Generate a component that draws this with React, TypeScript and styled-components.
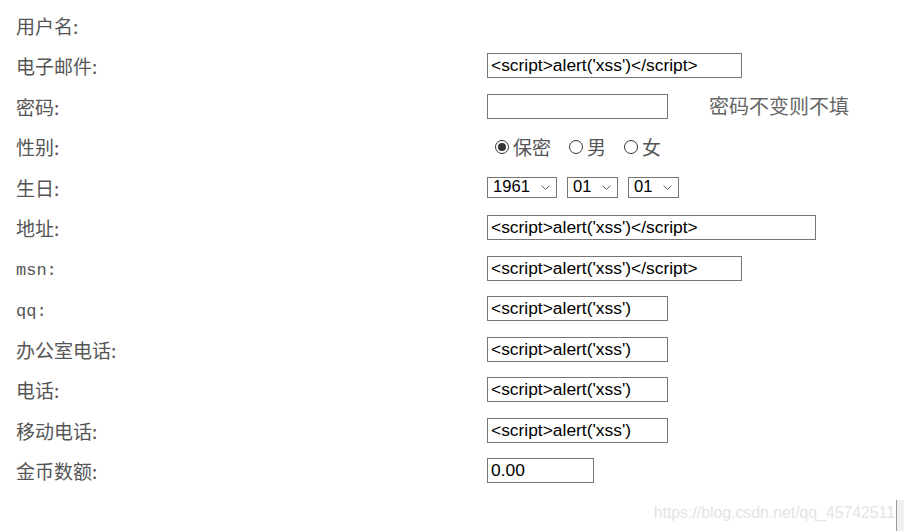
import React from "react";
import styled, { createGlobalStyle } from "styled-components";

const GlobalStyle = createGlobalStyle`
  html, body {
    margin: 0;
    padding: 0;
    background: #fff;
  }
  body {
    font-family: "Noto Sans CJK SC", sans-serif;
  }
`;

const PageSld = styled.div`
  position: relative;
  width: 904px;
  height: 531px;
  overflow: hidden;
  padding-top: 5px;
  box-sizing: border-box;
`;

const RowSld = styled.div`
  display: grid;
  grid-template-columns: 471px 1fr;
  align-items: center;
  height: 40.5px;
  padding-left: 16px;
`;

const LabelSld = styled.div`
  font-family: "Noto Sans CJK SC", sans-serif;
  font-size: 19px;
  color: #555;
  line-height: 1;
`;

const LatinSld = styled.span`
  font-family: "Liberation Mono", monospace;
  font-size: 17px;
`;

const FieldSld = styled.div`
  display: flex;
  align-items: center;
`;

const InputSld = styled.input<{ $w: number }>`
  width: ${(p) => p.$w}px;
  height: 25px;
  box-sizing: border-box;
  border: 1px solid #767676;
  border-radius: 0;
  padding: 0 3px;
  font-family: "Liberation Sans", sans-serif;
  font-size: 17.4px;
  color: #000;
  outline: none;
`;

const HintSld = styled.span`
  margin-left: 41px;
  font-size: 20px;
  line-height: 1;
  color: #666;
`;

const RadioLabelSld = styled.label`
  display: flex;
  align-items: center;
  margin-left: 8px;
  margin-right: 10px;
  font-size: 19px;
  line-height: 1;
  color: #555;
`;

const RadioCircleSld = styled.span<{ $on?: boolean }>`
  width: 14px;
  height: 14px;
  box-sizing: border-box;
  border-radius: 50%;
  border: 1px solid #333;
  margin-right: 4px;
  display: flex;
  align-items: center;
  justify-content: center;
  &::after {
    content: "";
    width: 8px;
    height: 8px;
    border-radius: 50%;
    background: ${(p) => (p.$on ? "#333" : "transparent")};
  }
`;

const SelectWrapSld = styled.span<{ $w: number }>`
  position: relative;
  display: inline-flex;
  align-items: center;
  width: ${(p) => p.$w}px;
  height: 21px;
  box-sizing: border-box;
  border: 1px solid #767676;
  margin-right: 10px;
  padding-left: 5px;
  font-family: "Liberation Sans", sans-serif;
  font-size: 16.6px;
  color: #000;
  svg {
    position: absolute;
    right: 6px;
    top: 7px;
  }
`;

const WatermarkSld = styled.div`
  position: absolute;
  right: 9px;
  bottom: 9px;
  font-family: "Liberation Sans", sans-serif;
  font-size: 15.8px;
  color: #e4e4e4;
`;

const EdgeBoxSld = styled.div`
  position: absolute;
  right: 0;
  bottom: 0;
  width: 7px;
  height: 31px;
  background: #f0f0f0;
  border-left: 1px solid #999;
`;

const XSS = "<script>alert('xss')</script>";
const XSS_SHORT = "<script>alert('xss')";

function Select({ value, w }: { value: string; w: number }) {
  return (
    <SelectWrapSld $w={w}>
      {value}
      <svg width="9" height="5" viewBox="0 0 9 5">
        <path d="M0.5 0.5 L4.5 4.5 L8.5 0.5" fill="none" stroke="#666" strokeWidth="1" />
      </svg>
    </SelectWrapSld>
  );
}

export default function App() {
  return (
    <>
      <GlobalStyle />
      <PageSld>
        <RowSld>
          <LabelSld>用户名:</LabelSld>
          <FieldSld />
        </RowSld>
        <RowSld>
          <LabelSld>电子邮件:</LabelSld>
          <FieldSld>
            <InputSld $w={255} defaultValue={XSS} />
          </FieldSld>
        </RowSld>
        <RowSld>
          <LabelSld>密码:</LabelSld>
          <FieldSld>
            <InputSld $w={181} type="password" />
            <HintSld>密码不变则不填</HintSld>
          </FieldSld>
        </RowSld>
        <RowSld>
          <LabelSld>性别:</LabelSld>
          <FieldSld>
            <RadioLabelSld>
              <RadioCircleSld $on />
              保密
            </RadioLabelSld>
            <RadioLabelSld>
              <RadioCircleSld />
              男
            </RadioLabelSld>
            <RadioLabelSld>
              <RadioCircleSld />
              女
            </RadioLabelSld>
          </FieldSld>
        </RowSld>
        <RowSld>
          <LabelSld>生日:</LabelSld>
          <FieldSld>
            <Select value="1961" w={70} />
            <Select value="01" w={51} />
            <Select value="01" w={51} />
          </FieldSld>
        </RowSld>
        <RowSld>
          <LabelSld>地址:</LabelSld>
          <FieldSld>
            <InputSld $w={329} defaultValue={XSS} />
          </FieldSld>
        </RowSld>
        <RowSld>
          <LabelSld>
            <LatinSld>msn:</LatinSld>
          </LabelSld>
          <FieldSld>
            <InputSld $w={255} defaultValue={XSS} />
          </FieldSld>
        </RowSld>
        <RowSld>
          <LabelSld>
            <LatinSld>qq:</LatinSld>
          </LabelSld>
          <FieldSld>
            <InputSld $w={181} defaultValue={XSS_SHORT} />
          </FieldSld>
        </RowSld>
        <RowSld>
          <LabelSld>办公室电话:</LabelSld>
          <FieldSld>
            <InputSld $w={181} defaultValue={XSS_SHORT} />
          </FieldSld>
        </RowSld>
        <RowSld>
          <LabelSld>电话:</LabelSld>
          <FieldSld>
            <InputSld $w={181} defaultValue={XSS_SHORT} />
          </FieldSld>
        </RowSld>
        <RowSld>
          <LabelSld>移动电话:</LabelSld>
          <FieldSld>
            <InputSld $w={181} defaultValue={XSS_SHORT} />
          </FieldSld>
        </RowSld>
        <RowSld>
          <LabelSld>金币数额:</LabelSld>
          <FieldSld>
            <InputSld $w={107} defaultValue="0.00" />
          </FieldSld>
        </RowSld>
        <WatermarkSld>https://blog.csdn.net/qq_45742511</WatermarkSld>
        <EdgeBoxSld />
      </PageSld>
    </>
  );
}
